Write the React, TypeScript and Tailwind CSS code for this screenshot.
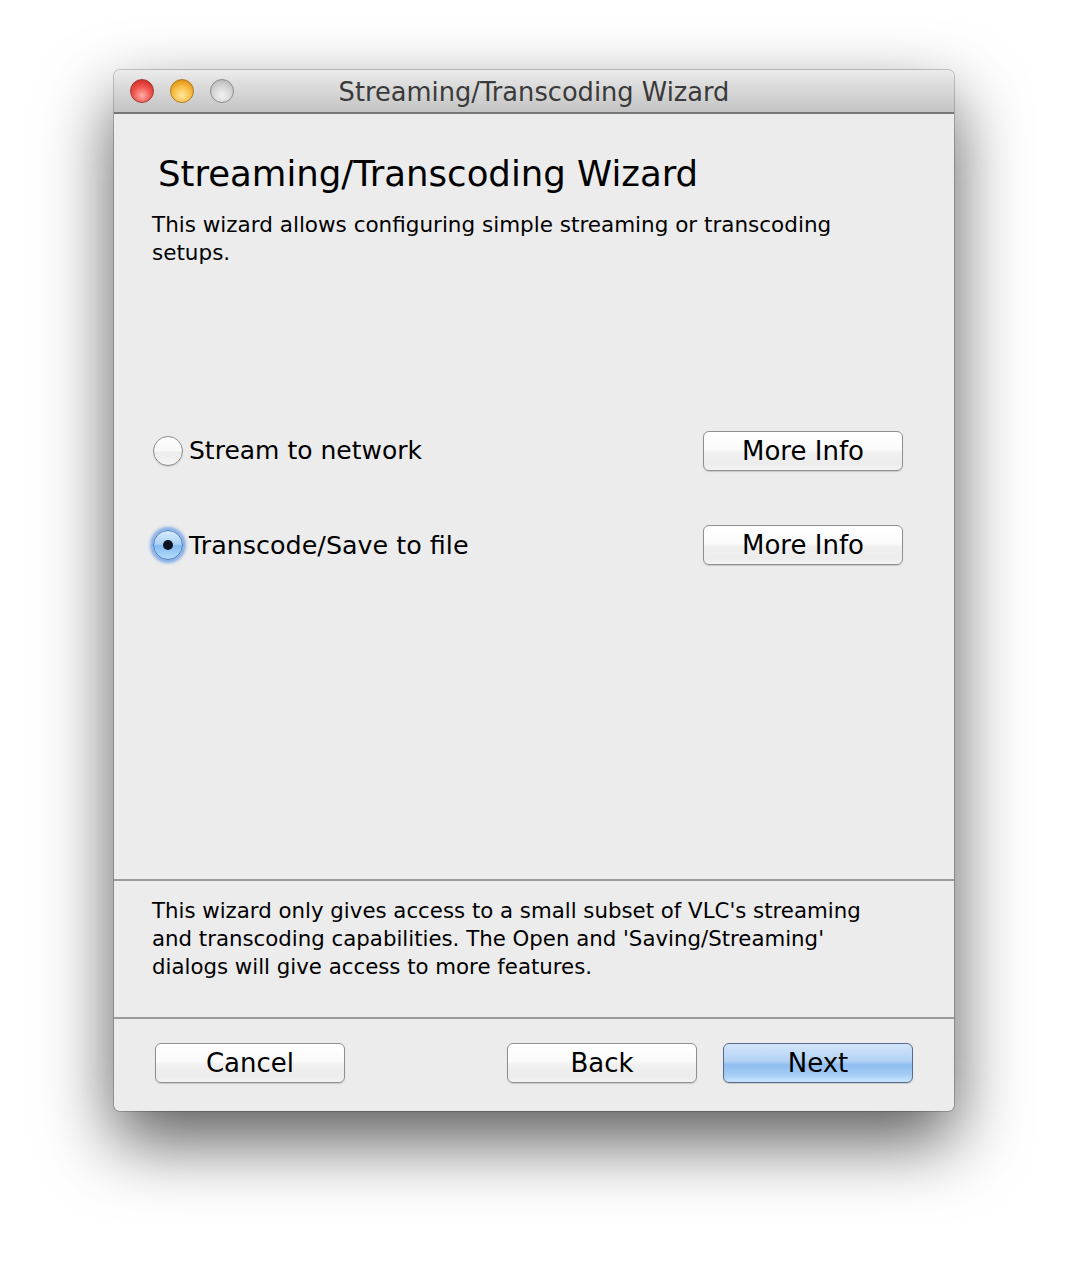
import React from "react";

const font = { fontFamily: '"DejaVu Sans", "Liberation Sans", sans-serif' };

function AquaButton({ children, primary = false, className = "" }: { children: React.ReactNode; primary?: boolean; className?: string }) {
  return (
    <button
      className={
        "h-[40px] rounded-[6px] border text-[26px] leading-none text-black flex items-center justify-center shadow-[0_1px_1px_rgba(0,0,0,0.15)] " +
        (primary
          ? "border-[#5a6a8c] bg-[linear-gradient(to_bottom,#d3e5fa_0%,#b3d2f5_45%,#8fbdf0_55%,#a4cdf5_80%,#c8e6fc_100%)] "
          : "border-[#8f8f8f] bg-[linear-gradient(to_bottom,#ffffff_0%,#fbfbfb_45%,#f0f0f0_55%,#ececec_85%,#f4f4f4_100%)] ") +
        className
      }
      style={font}
    >
      {children}
    </button>
  );
}

function Radio({ checked }: { checked: boolean }) {
  if (checked) {
    return (
      <div className="w-[30px] h-[30px] rounded-full shadow-[0_0_3px_3px_rgba(90,150,230,0.7)] border border-[#4a78b8] bg-[linear-gradient(to_bottom,#d9ecfd_0%,#a9d1f6_48%,#82bdf2_52%,#b7dcfb_100%)] flex items-center justify-center shrink-0">
        <div className="w-[10px] h-[10px] rounded-full bg-[#0c1420]" />
      </div>
    );
  }
  return (
    <div className="w-[30px] h-[30px] rounded-full border border-[#8c8c8c] bg-[linear-gradient(to_bottom,#ffffff_0%,#f7f7f7_50%,#ececec_55%,#f6f6f6_100%)] shadow-[0_1px_1px_rgba(0,0,0,0.15)] shrink-0" />
  );
}

export default function App() {
  return (
    <div className="w-[1068px] h-[1270px] bg-white pl-[114px] pt-[70px]" style={font}>
      <div className="w-[840px] h-[1041px] rounded-[6px] bg-[#ececec] flex flex-col shadow-[0_0_0_1px_rgba(0,0,0,0.2),0_30px_70px_rgba(0,0,0,0.65)] overflow-hidden">
        {/* Title bar */}
        <div className="h-[44px] shrink-0 relative flex items-center bg-[linear-gradient(to_bottom,#ececec_0%,#dadada_40%,#c4c4c4_100%)] border-b-2 border-[#767676]">
          <div className="flex items-center gap-[16px] pl-[16px]">
            <div className="w-[24px] h-[24px] rounded-full border border-[#a33a35] bg-[radial-gradient(circle_at_50%_70%,#ffb0aa_0%,#f25650_45%,#d2302a_80%,#b82520_100%)]" />
            <div className="w-[24px] h-[24px] rounded-full border border-[#b07a1e] bg-[radial-gradient(circle_at_50%_70%,#ffe7a0_0%,#f9c048_45%,#e3951a_80%,#c97e14_100%)]" />
            <div className="w-[24px] h-[24px] rounded-full border border-[#8d8d8d] bg-[radial-gradient(circle_at_50%_70%,#f2f2f2_0%,#d8d8d8_45%,#bdbdbd_80%,#a9a9a9_100%)]" />
          </div>
          <div className="absolute inset-0 flex items-center justify-center text-[25.7px] text-[#3a3a3a] pt-[2px]">
            Streaming/Transcoding Wizard
          </div>
        </div>

        {/* Main content */}
        <div className="flex-1 flex flex-col pl-[38px] pr-[51px]">
          <h1 className="text-[35.5px] leading-[44px] text-black pl-[6px] mt-[38px]">Streaming/Transcoding Wizard</h1>
          <p className="text-[21.5px] leading-[28px] text-black mt-[15px] w-[700px]">
            This wizard allows configuring simple streaming or transcoding setups.
          </p>
          <div className="mt-[164px] flex flex-col gap-[54px]">
            <div className="flex items-center justify-between h-[40px]">
              <div className="flex items-center gap-[6px] pl-[1px]">
                <Radio checked={false} />
                <span className="text-[25px] text-black">Stream to network</span>
              </div>
              <AquaButton className="w-[200px]">More Info</AquaButton>
            </div>
            <div className="flex items-center justify-between h-[40px]">
              <div className="flex items-center gap-[6px] pl-[1px]">
                <Radio checked={true} />
                <span className="text-[25.4px] text-black">Transcode/Save to file</span>
              </div>
              <AquaButton className="w-[200px]">More Info</AquaButton>
            </div>
          </div>
        </div>

        {/* Footer note */}
        <div className="h-[138px] shrink-0 border-t-2 border-[#9a9a9a] pl-[38px] pr-[60px] pt-[16px]">
          <p className="text-[21.3px] leading-[28px] text-black">
            This wizard only gives access to a small subset of VLC's streaming and transcoding capabilities. The Open and 'Saving/Streaming' dialogs will give access to more features.
          </p>
        </div>

        {/* Buttons */}
        <div className="h-[94px] shrink-0 border-t-2 border-[#9a9a9a] flex items-start pt-[24px] px-[41px]">
          <AquaButton className="w-[190px]">Cancel</AquaButton>
          <div className="flex-1" />
          <AquaButton className="w-[190px]">Back</AquaButton>
          <AquaButton primary className="w-[190px] ml-[26px]">Next</AquaButton>
        </div>
      </div>
    </div>
  );
}
